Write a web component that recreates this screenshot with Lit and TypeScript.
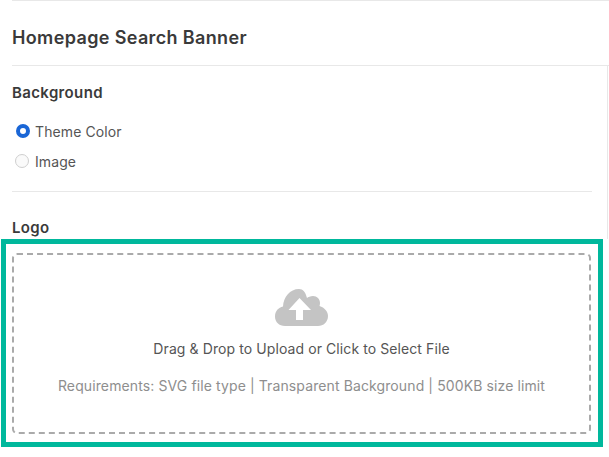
import { LitElement, html, css } from "lit";
import { customElement } from "lit/decorators.js";

@customElement("app-root")
export class AppRoot extends LitElement {
  static styles = css`
    :host {
      display: block;
      width: 609px;
      height: 457px;
      background: #fff;
      font-family: Inter, "Liberation Sans", sans-serif;
      color: #3a3a3a;
      overflow: hidden;
    }
    .top {
      margin-left: 12px;
      height: 1px;
      background: #e8e8e8;
    }
    h1 {
      margin: 0 0 0 12px;
      height: 65px;
      box-sizing: border-box;
      border-bottom: 1px solid #e8e8e8;
      padding-top: 26px;
      font-size: 18px;
      line-height: 22px;
      font-weight: 600;
      letter-spacing: 0.36px;
    }
    .panel {
      margin-left: 12px;
      width: 596px;
      height: 173px;
      box-sizing: border-box;
      border-right: 1px solid #e8e8e8;
      padding-top: 18px;
    }
    h2 {
      margin: 0;
      font-size: 15px;
      line-height: 18px;
      font-weight: 600;
      letter-spacing: 0.36px;
    }
    .radios {
      display: flex;
      flex-direction: column;
      gap: 10px;
      margin-top: 19px;
      height: 70px;
      border-bottom: 1px solid #e8e8e8;
      width: 580px;
    }
    .radio {
      display: flex;
      align-items: center;
      gap: 5px;
      height: 20px;
      padding-left: 4px;
      font-size: 14px;
      letter-spacing: 0.1px;
      color: #555;
    }
    .dot {
      width: 14px;
      height: 14px;
      border-radius: 50%;
      box-sizing: border-box;
      flex: none;
    }
    .on {
      border: 4px solid #1a66d6;
      background: #fff;
    }
    .off {
      border: 1px solid #cfcfcf;
      background: #fafafa;
      margin-left: -1px;
      margin-right: 1px;
    }
    .logo {
      margin-top: 27px;
    }
    .highlight {
      margin-left: 1px;
      width: 602px;
      height: 208px;
      box-sizing: border-box;
      border: 5px solid #00b89c;
      padding: 9px 7px 8px 6px;
      display: flex;
    }
    .drop {
      flex: 1;
      border: 2px dashed #aaa;
      border-radius: 5px;
      display: flex;
      flex-direction: column;
      align-items: center;
      padding-top: 34px;
      box-sizing: border-box;
    }
    svg {
      display: block;
      width: 53px;
      height: 37px;
    }
    .main {
      margin-top: 14px;
      font-size: 14px;
      line-height: 18px;
      letter-spacing: 0.09px;
      color: #555;
    }
    .req {
      margin-top: 19px;
      font-size: 14px;
      line-height: 18px;
      letter-spacing: 0.11px;
      color: #8e8e8e;
    }
  `;

  render() {
    return html`
      <div class="top"></div>
      <h1>Homepage Search Banner</h1>
      <div class="panel">
        <h2>Background</h2>
        <div class="radios">
          <div class="radio"><span class="dot on"></span>Theme Color</div>
          <div class="radio"><span class="dot off"></span>Image</div>
        </div>
        <h2 class="logo">Logo</h2>
      </div>
      <div class="highlight">
        <div class="drop">
          <svg viewBox="0 0 53 37">
            <path
              fill="#c4c4c4"
              fill-rule="evenodd"
              d="M10 37C4 37 0 33 0 27.5 0 22 3.5 18.5 8 17.5 8.5 8 15 0 24 0 28 0 30.5 3 32 9 33 8 35.500 7 38 7c4 0 7 3 7 7 0 1-.2 2-.5 3C49.500 18.500 53 22.500 53 27c0 6-4.500 10-10 10H10zM24.500 9 13.500 21H21v10h7V21h8L24.500 9z"
            />
          </svg>
          <div class="main">Drag &amp; Drop to Upload or Click to Select File</div>
          <div class="req">Requirements: SVG file type | Transparent Background | 500KB size limit</div>
        </div>
      </div>
    `;
  }
}
